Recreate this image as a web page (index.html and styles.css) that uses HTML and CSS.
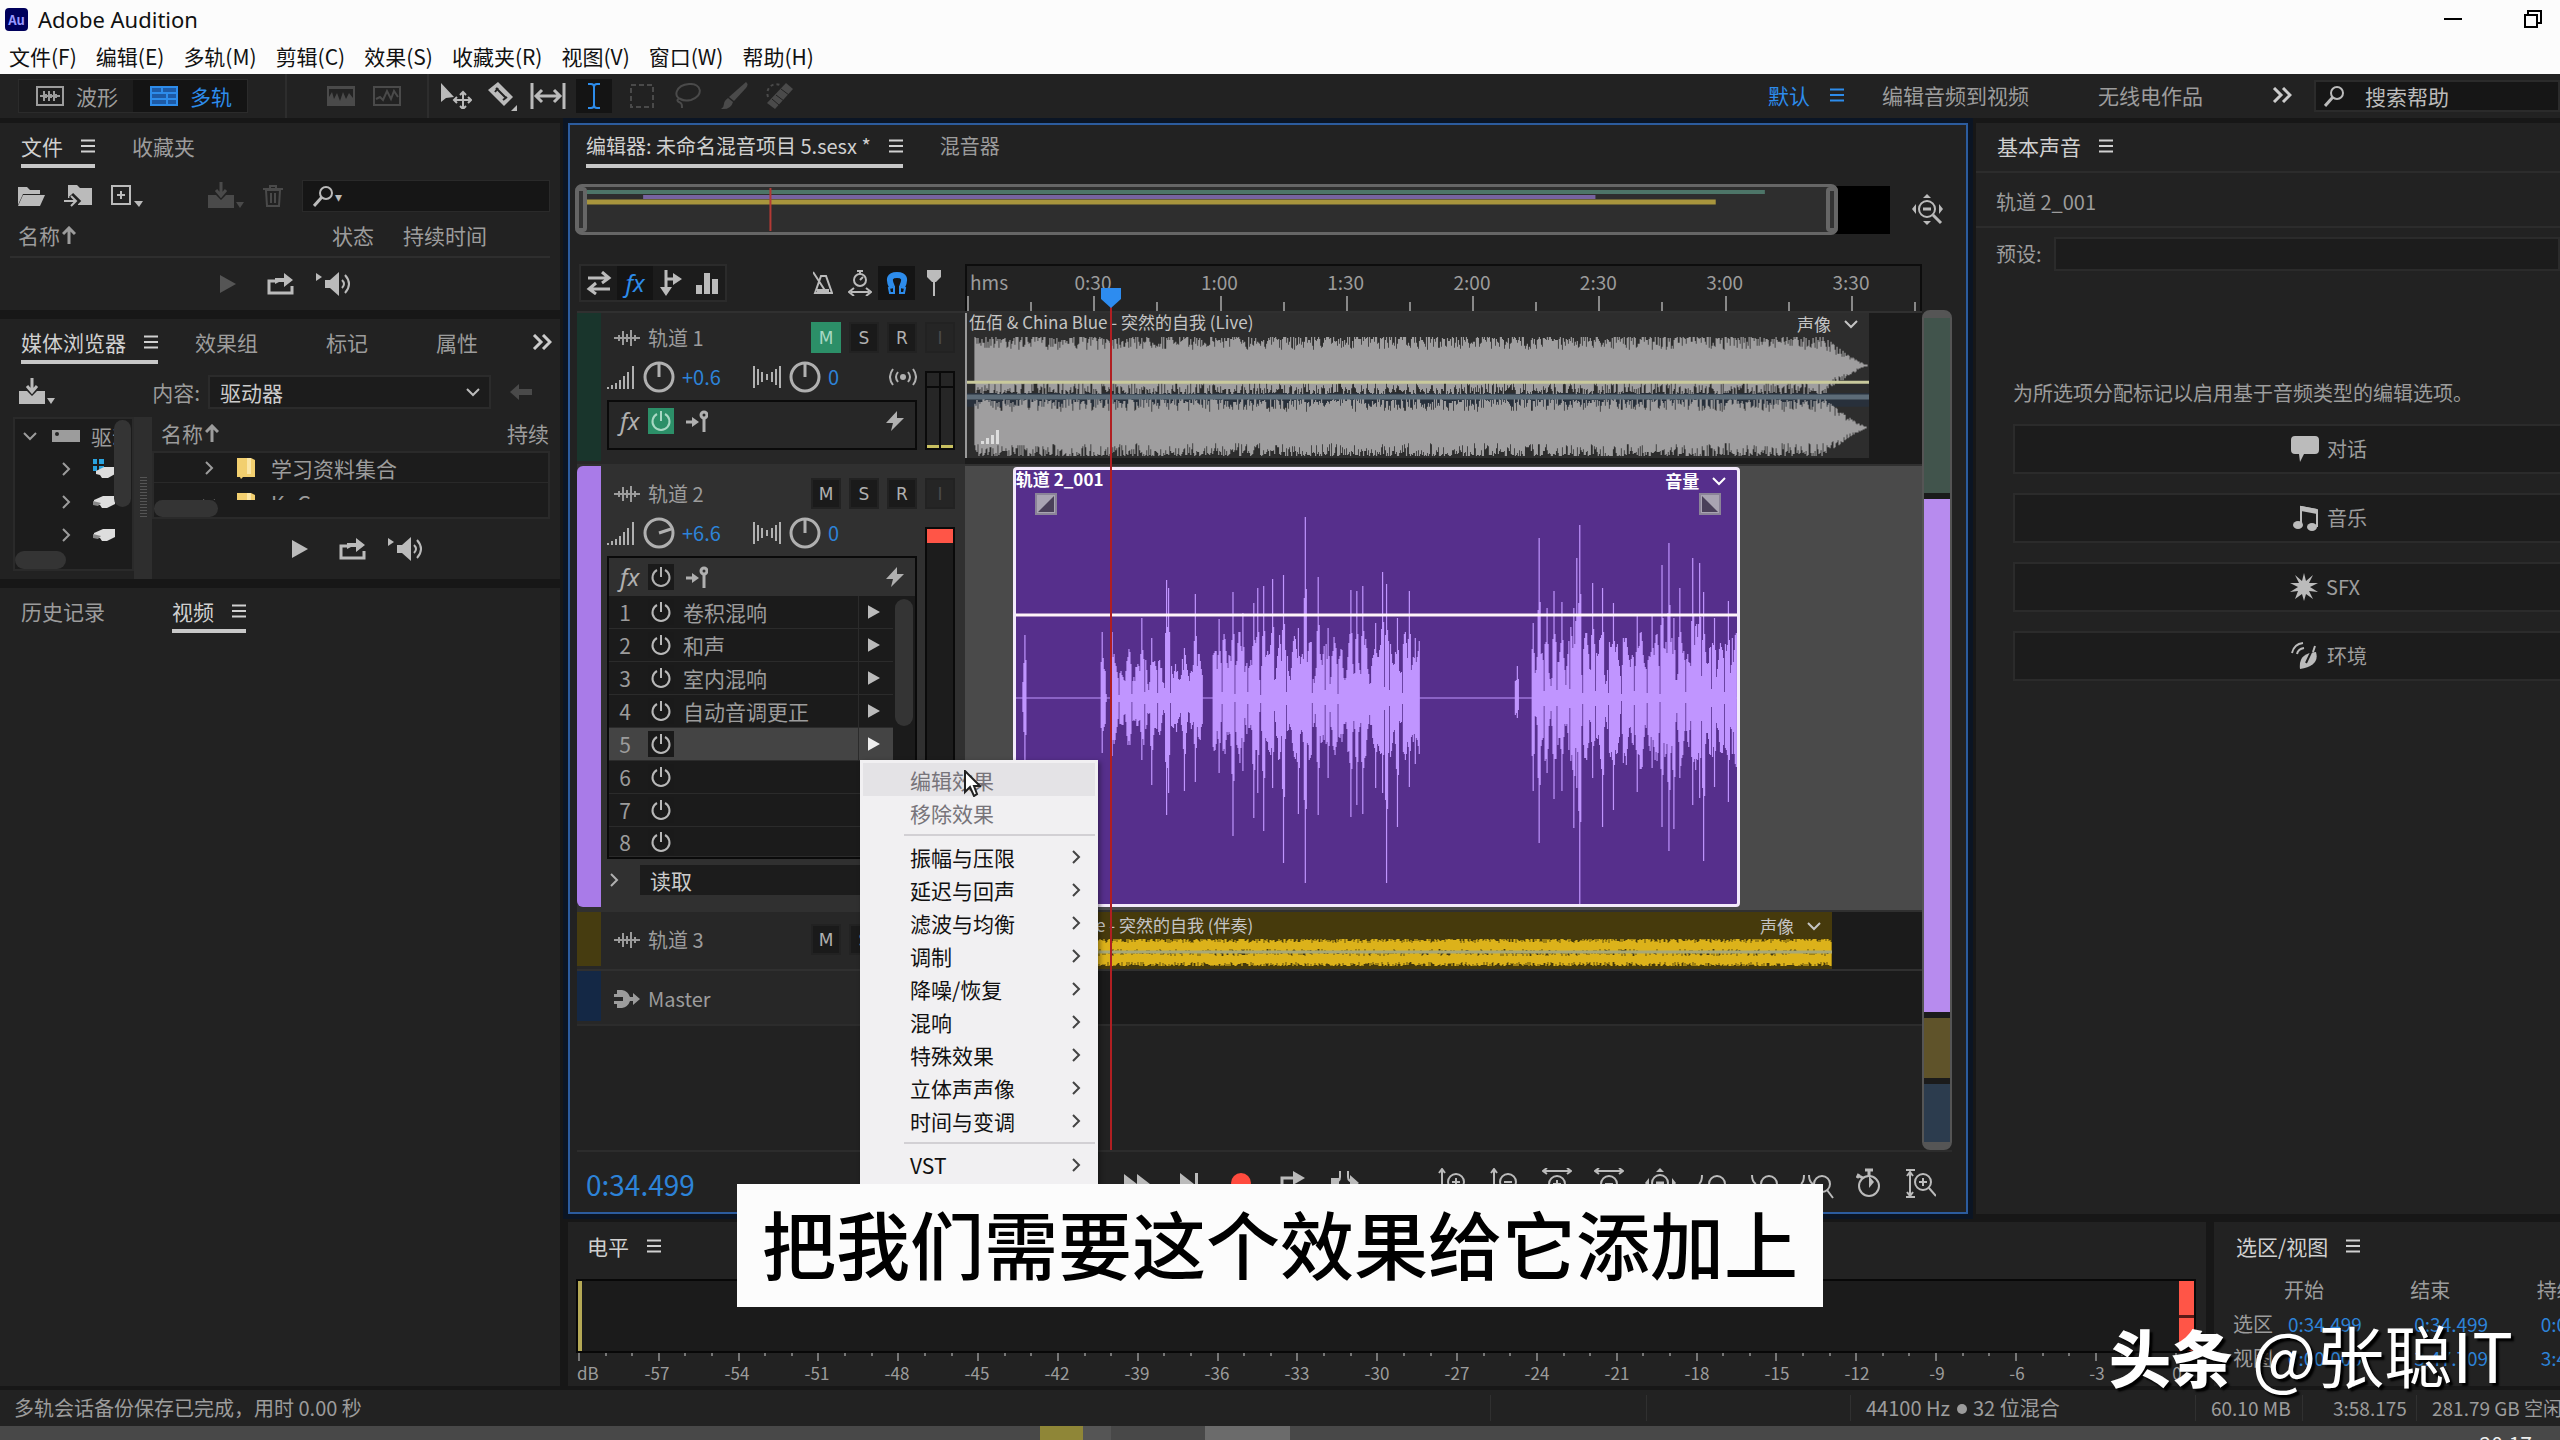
FILE: index.html
```html
<!DOCTYPE html>
<html lang="zh-CN">
<head>
  <meta charset="UTF-8">
  <meta name="viewport" content="width=device-width, initial-scale=1.0">
  <title>Adobe Audition</title>
  <link rel="stylesheet" href="styles.css">
</head>
<body>

<!-- Icons -->
<svg class="sprite" aria-hidden="true">
  <symbol id="i-menu" viewBox="0 0 14 14"><path d="M0 1.5h14M0 7h14M0 12.5h14" stroke="currentColor" stroke-width="2"/></symbol>
  <symbol id="i-more" viewBox="0 0 20 16"><path d="M2 1l7 7-7 7M11 1l7 7-7 7" fill="none" stroke="currentColor" stroke-width="3"/></symbol>
  <symbol id="i-down" viewBox="0 0 14 14"><path d="M1 4l6 6 6-6" fill="none" stroke="currentColor" stroke-width="2"/></symbol>
  <symbol id="i-right" viewBox="0 0 14 14"><path d="M4 1l6 6-6 6" fill="none" stroke="currentColor" stroke-width="2"/></symbol>
  <symbol id="i-up" viewBox="0 0 14 18"><path d="M7 18V3M1 8l6-6 6 6" fill="none" stroke="currentColor" stroke-width="3"/></symbol>
  <symbol id="i-play" viewBox="0 0 16 18"><path d="M0 0l16 9-16 9z" fill="currentColor"/></symbol>
  <symbol id="i-waveform" viewBox="0 0 28 20"><path d="M1 1h26v18H1z" fill="none" stroke="currentColor" stroke-width="2"/><path d="M4 10h20M8 5v10M13 5v10M18 5v10M10 8v4M15 8v4M20 8v4" stroke="currentColor" stroke-width="2"/></symbol>
  <symbol id="i-multitrack" viewBox="0 0 28 20"><path d="M0 0h28v20H0z" fill="#1d5aa6"/><path d="M1 1h26v18H1zM1 7h26M12 1v6M1 13h16M17 7v12M17 13h10" fill="none" stroke="currentColor" stroke-width="2"/></symbol>
  <symbol id="i-spectral" viewBox="0 0 28 20"><path d="M0 0h28v20H0z" fill="currentColor"/><path d="M2 3v8l3-5 2 7 3-6 3 8 3-9 3 7 3-6 4 5V3z" fill="#222"/></symbol>
  <symbol id="i-pitch" viewBox="0 0 28 20"><path d="M1 1h26v18H1z" fill="none" stroke="currentColor" stroke-width="2"/><path d="M3 13l4-2 3 3 4-9 4 8 3-8 4 6" fill="none" stroke="currentColor" stroke-width="2"/></symbol>
  <symbol id="i-move" viewBox="0 0 32 26"><path d="M1 0v19l5-4 8-1z" fill="currentColor"/><path d="M23 10v15M15 17h16M20 12l3-3 3 3M20 23l3 3 3-3M17 14l-3 3 3 3M28 14l3 3-3 3" fill="none" stroke="currentColor" stroke-width="2"/></symbol>
  <symbol id="i-razor" viewBox="0 0 30 30"><path d="M11 1l15 15-9 9L1 9z" fill="currentColor"/><path d="M9 7l10 10M8 11l3-4M16 19l4-3" stroke="#222" stroke-width="2"/><path d="M30 24v6h-6z" fill="currentColor"/></symbol>
  <symbol id="i-slip" viewBox="0 0 36 26"><path d="M2 0v26M34 0v26M6 13h24M12 7l-6 6 6 6M24 7l6 6-6 6" fill="none" stroke="currentColor" stroke-width="3"/></symbol>
  <symbol id="i-ibeam" viewBox="0 0 16 26"><path d="M2 1h3q3 0 3 3v18q0 3-3 3H2M14 1h-3q-3 0-3 3M14 25h-3q-3 0-3-3" fill="none" stroke="currentColor" stroke-width="2"/></symbol>
  <symbol id="i-marquee" viewBox="0 0 26 26"><path d="M2 2h22v22H2z" fill="none" stroke="currentColor" stroke-width="2" stroke-dasharray="5 3"/></symbol>
  <symbol id="i-lasso" viewBox="0 0 28 26"><path d="M8 17C-2 14 2 2 15 1s15 12 2 16c-5 1-9 0-10-1-3-2-5 2-2 3s3 3 3 6" fill="none" stroke="currentColor" stroke-width="2"/></symbol>
  <symbol id="i-brush" viewBox="0 0 28 28"><path d="M26 0q3 2 0 6L14 19l-5-4z" fill="currentColor"/><path d="M8 16l5 4q-2 8-12 7 3-2 3-5t4-6z" fill="currentColor"/></symbol>
  <symbol id="i-heal" viewBox="0 0 30 28"><path d="M21 1l7 6-18 20-8-6z" fill="currentColor"/><path d="M16 7l8 6M11 13l8 6M7 17l7 6" stroke="#222" stroke-width="1"/><path d="M3 15C0 6 8 0 15 3" fill="none" stroke="currentColor" stroke-width="2" stroke-dasharray="3 3"/></symbol>
  <symbol id="i-search" viewBox="0 0 22 22"><circle cx="13" cy="8" r="6" fill="none" stroke="currentColor" stroke-width="2"/><path d="M9 12l-8 9" stroke="currentColor" stroke-width="3"/></symbol>
  <symbol id="i-folder" viewBox="0 0 28 22"><path d="M1 20V2h9l3 3h10v4H6z" fill="currentColor"/><path d="M6 10h22l-5 11H1z" fill="currentColor"/></symbol>
  <symbol id="i-import" viewBox="0 0 28 24"><path d="M4 11V1h9l3 3h12v17H14v-4H4z" fill="currentColor"/><path d="M0 17h11M7 11l6 6-6 6" fill="none" stroke="#222" stroke-width="6"/><path d="M0 17h11M7 12l5 5-5 5" fill="none" stroke="currentColor" stroke-width="2"/></symbol>
  <symbol id="i-new" viewBox="0 0 32 24"><path d="M1 2h18v18H1zM10 7v8M6 11h8" fill="none" stroke="currentColor" stroke-width="2"/><path d="M23 17h9l-4 6z" fill="currentColor"/></symbol>
  <symbol id="i-insert" viewBox="0 0 36 28"><path d="M0 13h8l5 5 5-5h8v13H0z" fill="currentColor"/><path d="M13 0v12M8 8l5 6 5-6" fill="none" stroke="currentColor" stroke-width="3"/><path d="M28 20h8l-4 6z" fill="currentColor"/></symbol>
  <symbol id="i-trash" viewBox="0 0 20 22"><path d="M0 4h20M7 4V1h6v3M3 5h14l-1 16H4zM8 8v10M12 8v10" fill="none" stroke="currentColor" stroke-width="2"/></symbol>
  <symbol id="i-export" viewBox="0 0 28 22"><path d="M8 8H2v12h23v-7" fill="none" stroke="currentColor" stroke-width="3"/><path d="M8 11V5h9V0l9 7-9 7V9h-5z" fill="currentColor"/></symbol>
  <symbol id="i-speaker" viewBox="0 0 36 24"><path d="M0 1l6 4-6 4zM9 8h5l9-8v24l-9-8H9z" fill="currentColor"/><path d="M26 8q4 4 0 8M29 3q8 9 0 18" fill="none" stroke="currentColor" stroke-width="2"/></symbol>
  <symbol id="i-drive" viewBox="0 0 28 14"><path d="M0 1h28v12H0z" fill="currentColor"/><circle cx="5" cy="5" r="2" fill="#222"/></symbol>
  <symbol id="i-disk" viewBox="0 0 22 16"><path d="M1 6l9-4h12v8l-8 4H9l-2-3H1z" fill="#ddd"/><path d="M0 7l8 2-3 3-5-1z" fill="#888"/></symbol>
  <symbol id="i-win" viewBox="0 0 22 20"><path d="M0 0h4v5H0zM6 0h5v5H6zM0 7h4v5H0zM6 7h5v5H6z" fill="#2aa3df"/><path d="M3 12l8-4h11v7l-7 4H9l-2-3-4-1z" fill="#ddd"/></symbol>
  <symbol id="i-back" viewBox="0 0 22 16"><path d="M0 8l9-8v5h13v6H9v5z" fill="currentColor"/></symbol>
  <symbol id="i-dir" viewBox="0 0 18 22"><path d="M0 1h14l4 2v17H6l-2 2-1-2H0z" fill="#f2cf6f"/><path d="M10 1h4v16h-4z" fill="#fbe6a6"/></symbol>
  <symbol id="i-fit" viewBox="0 0 32 32"><circle cx="15" cy="15" r="8" fill="none" stroke="currentColor" stroke-width="2"/><path d="M11 15h8M21 21l8 8" stroke="currentColor" stroke-width="3"/><path d="M15 0l4 4h-8zM15 31l-4-4h8zM0 15l4-5v10zM31 15l-4-5v10z" fill="currentColor"/></symbol>
  <symbol id="i-swap" viewBox="0 0 26 24"><path d="M2 7h20M16 1l7 6-7 5M24 18H4M10 12l-7 6 7 5" fill="none" stroke="currentColor" stroke-width="3"/></symbol>
  <symbol id="i-sends" viewBox="0 0 24 26"><path d="M7 0v20M7 9h11" stroke="currentColor" stroke-width="3"/><path d="M14 3l9 6-9 6zM1 17h12l-6 9z" fill="currentColor"/></symbol>
  <symbol id="i-eq" viewBox="0 0 22 22"><path d="M0 13h6v9H0zM8 1h6v21H8zM16 7h6v15h-6z" fill="currentColor"/></symbol>
  <symbol id="i-metro" viewBox="0 0 20 24"><path d="M2 22L8 5h5l6 17zM0 1l13 20" fill="none" stroke="currentColor" stroke-width="2"/><path d="M4 18h12v4H4z" fill="currentColor"/></symbol>
  <symbol id="i-stretch" viewBox="0 0 24 26"><circle cx="12" cy="10" r="6" fill="none" stroke="currentColor" stroke-width="2"/><path d="M9 1h6M12 1v3M12 10l3-3M3 22h18M6 18l-5 4 5 4M18 18l5 4-5 4" fill="none" stroke="currentColor" stroke-width="2"/></symbol>
  <symbol id="i-magnet" viewBox="0 0 22 24"><path d="M6 16Q0 4 11 4q11 0 5 12" fill="none" stroke="currentColor" stroke-width="6"/><path d="M3 17l5-1v6H4zM19 17l-5-1v6h4z" fill="none" stroke="currentColor" stroke-width="2"/></symbol>
  <symbol id="i-marker" viewBox="0 0 14 26"><path d="M0 0h14v7l-5 5H5L0 7z" fill="currentColor"/><path d="M7 10v16" stroke="currentColor" stroke-width="2"/></symbol>
  <symbol id="i-audio" viewBox="0 0 26 18"><path d="M0 9h26" stroke="currentColor" stroke-width="2"/><path d="M5 6v6M9 2v14M13 5v8M17 1v16M21 6v6" stroke="currentColor" stroke-width="2"/></symbol>
  <symbol id="i-level" viewBox="0 0 28 24"><path d="M1 22v2M5 20v4M9 18v6M13 15v9M17 11v13M21 7v17M26 1v23" stroke="currentColor" stroke-width="2"/></symbol>
  <symbol id="i-pan" viewBox="0 0 28 24"><path d="M1 1v22M5 4v16M9 7v10M14 9v6M19 7v10M23 4v16M27 1v22" stroke="currentColor" stroke-width="2"/></symbol>
  <symbol id="i-knob" viewBox="0 0 32 32"><circle cx="16" cy="16" r="14" fill="none" stroke="currentColor" stroke-width="3"/><path d="M16 3v13" stroke="currentColor" stroke-width="3"/></symbol>
  <symbol id="i-knob-right" viewBox="0 0 32 32"><circle cx="16" cy="16" r="14" fill="none" stroke="currentColor" stroke-width="3"/><path d="M28 12l-12 4" stroke="currentColor" stroke-width="3"/></symbol>
  <symbol id="i-monitor" viewBox="0 0 28 18"><circle cx="14" cy="9" r="3" fill="currentColor"/><path d="M9 4q-4 5 0 10M19 4q4 5 0 10M4 1q-6 8 0 16M24 1q6 8 0 16" fill="none" stroke="currentColor" stroke-width="2"/></symbol>
  <symbol id="i-power" viewBox="0 0 22 22"><path d="M7 4a8.5 8.5 0 1 0 8 0M11 1v10" fill="none" stroke="currentColor" stroke-width="2"/></symbol>
  <symbol id="i-pre" viewBox="0 0 22 22"><path d="M0 12h8M18 8v14" stroke="currentColor" stroke-width="3"/><path d="M6 7l7 5-7 5z" fill="currentColor"/><circle cx="18" cy="5" r="3" fill="none" stroke="currentColor" stroke-width="3"/></symbol>
  <symbol id="i-bolt" viewBox="0 0 18 20"><path d="M11 0L0 12h7l-2 8L18 7h-7z" fill="currentColor"/></symbol>
  <symbol id="i-master" viewBox="0 0 26 20"><path d="M3 1h5q6 1 8 7h3V4l7 6-7 6v-4h-3q-2 6-8 7H3v-4H0v-3h9v-4H0V5h3z" fill="currentColor"/></symbol>
  <symbol id="i-steps" viewBox="0 0 18 14"><path d="M0 11h3v3H0zM5 8h3v6H5zM10 5h3v9h-3zM15 0h3v14h-3z" fill="currentColor"/></symbol>
  <symbol id="i-fadein" viewBox="0 0 22 22"><path d="M1 1h20v20H1z" fill="#a9a4b2" stroke="#8b8498" stroke-width="2"/><path d="M19 3v16H3z" fill="#4a4059"/></symbol>
  <symbol id="i-fadeout" viewBox="0 0 22 22"><path d="M1 1h20v20H1z" fill="#a9a4b2" stroke="#8b8498" stroke-width="2"/><path d="M3 3l16 16H3z" fill="#4a4059"/></symbol>
  <symbol id="i-stop" viewBox="0 0 28 28"><path d="M4 4h20v20H4z" fill="currentColor"/></symbol>
  <symbol id="i-ff" viewBox="0 0 28 28"><path d="M1 4l13 10L1 24zM14 4l13 10-13 10z" fill="currentColor"/></symbol>
  <symbol id="i-next" viewBox="0 0 28 28"><path d="M5 3l14 11L5 25zM20 3h3v22h-3z" fill="currentColor"/></symbol>
  <symbol id="i-rec" viewBox="0 0 28 28"><circle cx="14" cy="13" r="10" fill="#ff4b3e"/></symbol>
  <symbol id="i-loop" viewBox="0 0 28 28"><path d="M3 22V8h13M25 15v9H8" fill="none" stroke="currentColor" stroke-width="3"/><path d="M14 1l12 7-12 7z" fill="currentColor"/></symbol>
  <symbol id="i-skip" viewBox="0 0 28 28"><path d="M9 1v6q0 5-6 5M17 1v6q0 5 7 5" fill="none" stroke="currentColor" stroke-width="2"/><path d="M0 8h8v9H0zM19 5l9 8-9 7z" fill="currentColor"/></symbol>
  <symbol id="i-vin" viewBox="0 0 30 32"><circle cx="18" cy="14" r="8" fill="none" stroke="currentColor" stroke-width="2"/><path d="M14 14h8M18 10v8M24 20l6 6M4 2v26M1 5l3-4 3 4" fill="none" stroke="currentColor" stroke-width="2"/></symbol>
  <symbol id="i-vout" viewBox="0 0 30 32"><circle cx="18" cy="14" r="8" fill="none" stroke="currentColor" stroke-width="2"/><path d="M14 14h8M24 20l6 6M4 2v26M1 5l3-4 3 4" fill="none" stroke="currentColor" stroke-width="2"/></symbol>
  <symbol id="i-hin" viewBox="0 0 30 32"><circle cx="15" cy="16" r="8" fill="none" stroke="currentColor" stroke-width="2"/><path d="M11 16h8M15 12v8M21 22l6 6M1 3h28M5 0L1 3l4 3M25 0l4 3-4 3" fill="none" stroke="currentColor" stroke-width="2"/></symbol>
  <symbol id="i-hout" viewBox="0 0 30 32"><circle cx="15" cy="16" r="8" fill="none" stroke="currentColor" stroke-width="2"/><path d="M11 16h8M21 22l6 6M1 3h28M5 0L1 3l4 3M25 0l4 3-4 3" fill="none" stroke="currentColor" stroke-width="2"/></symbol>
  <symbol id="i-zsel" viewBox="0 0 30 32"><circle cx="19" cy="16" r="8" fill="none" stroke="currentColor" stroke-width="2"/><path d="M25 22l5 6M4 7q0 7-3 9" fill="none" stroke="currentColor" stroke-width="2"/></symbol>
  <symbol id="i-zout" viewBox="0 0 30 32"><circle cx="19" cy="16" r="8" fill="none" stroke="currentColor" stroke-width="2"/><path d="M25 22l5 6M2 7q0 7 4 9" fill="none" stroke="currentColor" stroke-width="2"/></symbol>
  <symbol id="i-zboth" viewBox="0 0 34 32"><circle cx="22" cy="16" r="8" fill="none" stroke="currentColor" stroke-width="2"/><path d="M27 22l6 8M4 7q0 7-3 9M9 7q0 7 4 9" fill="none" stroke="currentColor" stroke-width="2"/></symbol>
  <symbol id="i-timer" viewBox="0 0 26 32"><circle cx="13" cy="18" r="10" fill="none" stroke="currentColor" stroke-width="2"/><path d="M9 2h8M13 2v6M3 6l-2 4M3 8l4 2" stroke="currentColor" stroke-width="3"/><path d="M13 8l5 6-5 6z" fill="currentColor"/></symbol>
  <symbol id="i-zfull" viewBox="0 0 30 32"><circle cx="17" cy="14" r="8" fill="none" stroke="currentColor" stroke-width="2"/><path d="M13 14h8M17 10v8M23 20l7 8M0 2h9M0 29h9M4 4v23M1 8l3-4 3 4M1 24l3 4 3-4" fill="none" stroke="currentColor" stroke-width="2"/></symbol>
  <symbol id="i-talk" viewBox="0 0 28 26"><path d="M4 0h20q4 0 4 4v10q0 4-4 4H13l-4 8-1-8H4q-4 0-4-4V4q0-4 4-4z" fill="currentColor"/></symbol>
  <symbol id="i-music" viewBox="0 0 28 26"><path d="M10 20V2l16 3v17" fill="none" stroke="currentColor" stroke-width="2"/><path d="M10 1l16 3v5L10 6z" fill="currentColor"/><ellipse cx="7" cy="20" rx="5" ry="4" fill="currentColor"/><ellipse cx="21" cy="22" rx="5" ry="4" fill="currentColor"/></symbol>
  <symbol id="i-sfx" viewBox="0 0 28 28"><path d="M14 0l2 8 7-6-4 8 9 0-8 4 8 5-9-1 4 8-7-5-2 7-2-7-7 5 3-8-8 1 8-5-8-4 9 0-4-8 7 6z" fill="currentColor"/></symbol>
  <symbol id="i-amb" viewBox="0 0 28 28"><path d="M9 27q-2-16 16-17 4 14-16 17z" fill="currentColor"/><path d="M15 21l8-17" stroke="#1c1c1c" stroke-width="2"/><path d="M22 10l2-6M1 11q2-9 11-10M6 12q1-5 7-6" fill="none" stroke="currentColor" stroke-width="2"/></symbol>
</svg>

<header class="titlebar">
  <div class="title-row">
    <span class="logo">Au</span>
    <span class="app-name">Adobe Audition</span>
    <div class="win-buttons">
      <button aria-label="最小化"><svg width="18" height="18" viewBox="0 0 18 18"><path d="M0 9h18" stroke="#000" stroke-width="2"/></svg></button>
      <button aria-label="还原"><svg width="18" height="18" viewBox="0 0 18 18"><path d="M1 5h12v12H1zM4 5V1h13v12h-4" fill="none" stroke="#000" stroke-width="2"/></svg></button>
    </div>
  </div>
  <nav class="menubar">
    <button>文件(F)</button><button>编辑(E)</button><button>多轨(M)</button><button>剪辑(C)</button><button>效果(S)</button><button>收藏夹(R)</button><button>视图(V)</button><button>窗口(W)</button><button>帮助(H)</button>
  </nav>
</header>

<div class="toolbar">
  <div class="mode">
    <button><svg width="28" height="20"><use href="#i-waveform"/></svg>波形</button>
    <button class="on"><svg width="28" height="20"><use href="#i-multitrack"/></svg>多轨</button>
  </div>
  <div class="tools views">
    <button class="dim"><svg width="28" height="20"><use href="#i-spectral"/></svg></button>
    <button class="dim"><svg width="28" height="20"><use href="#i-pitch"/></svg></button>
  </div>
  <div class="tools">
    <button><svg width="32" height="26"><use href="#i-move"/></svg></button>
    <button><svg width="30" height="30"><use href="#i-razor"/></svg></button>
    <button><svg width="36" height="26"><use href="#i-slip"/></svg></button>
    <button class="on"><svg width="16" height="26"><use href="#i-ibeam"/></svg></button>
    <button class="dim"><svg width="26" height="26"><use href="#i-marquee"/></svg></button>
    <button class="dim"><svg width="28" height="26"><use href="#i-lasso"/></svg></button>
    <button class="dim"><svg width="28" height="28"><use href="#i-brush"/></svg></button>
    <button class="dim"><svg width="30" height="28"><use href="#i-heal"/></svg></button>
  </div>
  <div class="workspaces">
    <button class="on">默认 <svg width="14" height="14"><use href="#i-menu"/></svg></button>
    <button>编辑音频到视频</button>
    <button>无线电作品</button>
    <button class="bright" aria-label="更多"><svg width="20" height="16"><use href="#i-more"/></svg></button>
  </div>
  <label class="help-search">
    <svg width="22" height="22"><use href="#i-search"/></svg>
    <input type="text" placeholder="搜索帮助" aria-label="搜索帮助">
  </label>
</div>

<main>
  <aside class="left">
    <section class="panel files">
      <div class="tabs">
        <button class="tab on">文件<svg width="14" height="14"><use href="#i-menu"/></svg></button>
        <button class="tab">收藏夹</button>
      </div>
      <div class="file-tools">
        <button><svg width="28" height="22"><use href="#i-folder"/></svg></button>
        <button><svg width="28" height="24"><use href="#i-import"/></svg></button>
        <button><svg width="32" height="24"><use href="#i-new"/></svg></button>
        <button class="dim push"><svg width="36" height="28"><use href="#i-insert"/></svg></button>
        <button class="dim"><svg width="20" height="22"><use href="#i-trash"/></svg></button>
        <label class="search"><svg width="22" height="22"><use href="#i-search"/></svg><span>▾</span><input type="text" aria-label="搜索文件"></label>
      </div>
      <table class="file-table">
        <thead><tr><th>名称<svg width="14" height="18"><use href="#i-up"/></svg></th><th>状态</th><th>持续时间</th></tr></thead>
      </table>
      <div class="mini-transport">
        <button class="dim"><svg width="16" height="18"><use href="#i-play"/></svg></button>
        <button><svg width="28" height="22"><use href="#i-export"/></svg></button>
        <button><svg width="36" height="24"><use href="#i-speaker"/></svg></button>
      </div>
    </section>

    <section class="panel media">
      <div class="tabs">
        <button class="tab on">媒体浏览器<svg width="14" height="14"><use href="#i-menu"/></svg></button>
        <button class="tab">效果组</button>
        <button class="tab">标记</button>
        <button class="tab">属性</button>
        <button class="more" aria-label="更多"><svg width="20" height="16"><use href="#i-more"/></svg></button>
      </div>
      <div class="media-bar">
        <button><svg width="38" height="28"><use href="#i-insert"/></svg></button>
        <label for="content">内容:</label>
        <select id="content"><option>驱动器</option></select>
        <button class="dim"><svg width="22" height="16"><use href="#i-back"/></svg></button>
      </div>
      <div class="media-body">
        <div class="tree">
          <div class="tree-rows">
            <button class="tree-row root"><svg width="14" height="14"><use href="#i-down"/></svg><svg width="28" height="14"><use href="#i-drive"/></svg>驱动器</button>
            <button class="tree-row"><svg width="14" height="14"><use href="#i-right"/></svg><svg width="22" height="20"><use href="#i-win"/></svg></button>
            <button class="tree-row"><svg width="14" height="14"><use href="#i-right"/></svg><svg width="22" height="16"><use href="#i-disk"/></svg></button>
            <button class="tree-row"><svg width="14" height="14"><use href="#i-right"/></svg><svg width="22" height="16"><use href="#i-disk"/></svg></button>
          </div>
          <i class="thumb tree-v"></i>
          <i class="thumb tree-h"></i>
        </div>
        <div class="splitter"><b></b></div>
        <div class="media-list">
          <div class="list-head"><span>名称<svg width="14" height="18"><use href="#i-up"/></svg></span><span>持续</span></div>
          <div class="list-box">
            <div class="list-rows">
              <div class="list-row"><svg width="14" height="14"><use href="#i-right"/></svg><svg width="18" height="22"><use href="#i-dir"/></svg>学习资料集合</div>
              <div class="list-row"><svg width="14" height="14"><use href="#i-down"/></svg><svg width="18" height="22"><use href="#i-dir"/></svg>KuGou</div>
            </div>
            <i class="thumb list-h"></i>
          </div>
          <div class="mini-transport">
            <button><svg width="16" height="18"><use href="#i-play"/></svg></button>
            <button><svg width="28" height="22"><use href="#i-export"/></svg></button>
            <button><svg width="36" height="24"><use href="#i-speaker"/></svg></button>
          </div>
        </div>
      </div>
    </section>

    <section class="panel history">
      <div class="tabs">
        <button class="tab">历史记录</button>
        <button class="tab on">视频<svg width="14" height="14"><use href="#i-menu"/></svg></button>
      </div>
    </section>
  </aside>

  <div class="work">
    <div class="work-top">
      <section class="panel editor">
        <div class="tabs">
          <button class="tab on">编辑器: 未命名混音项目 5.sesx *<svg width="14" height="14"><use href="#i-menu"/></svg></button>
          <button class="tab">混音器</button>
        </div>

        <div class="overview">
          <div class="ov-track">
            <div class="ov-frame">
              <svg viewBox="0 0 1236 43" preserveAspectRatio="none">
                <path d="M0 4h1175" stroke="#4d7568" stroke-width="4"/>
                <path d="M56 9h950" stroke="#7763a0" stroke-width="4"/>
                <path d="M0 14h1126" stroke="#a8953d" stroke-width="5"/>
                <path d="M183 0v43" stroke="#b33a35" stroke-width="2"/>
              </svg>
            </div>
          </div>
          <button><svg width="32" height="32"><use href="#i-fit"/></svg></button>
        </div>

        <div class="timeline">
          <div class="heads">
            <div class="head-tools">
              <div class="seg">
                <button><svg width="26" height="24"><use href="#i-swap"/></svg></button>
                <button class="on fx">fx</button>
                <button><svg width="24" height="26"><use href="#i-sends"/></svg></button>
                <button><svg width="22" height="22"><use href="#i-eq"/></svg></button>
              </div>
              <div class="seg snap">
                <button><svg width="20" height="24"><use href="#i-metro"/></svg></button>
                <button><svg width="24" height="26"><use href="#i-stretch"/></svg></button>
                <button class="on"><svg width="22" height="24"><use href="#i-magnet"/></svg></button>
                <button><svg width="14" height="26"><use href="#i-marker"/></svg></button>
              </div>
            </div>

            <div class="track green">
              <div class="track-body">
                <div class="track-title"><svg width="26" height="18"><use href="#i-audio"/></svg><span>轨道 1</span><button class="sq mute">M</button><button class="sq">S</button><button class="sq">R</button></div>
                <button class="sq off">I</button>
                <div class="knobs">
                  <svg width="28" height="24"><use href="#i-level"/></svg><svg class="knob" width="32" height="32"><use href="#i-knob"/></svg><span class="val">+0.6</span>
                  <svg width="28" height="24"><use href="#i-pan"/></svg><svg class="knob" width="32" height="32"><use href="#i-knob"/></svg><span class="val">0</span>
                  <svg class="mon" width="28" height="18"><use href="#i-monitor"/></svg>
                </div>
                <div class="meter quiet"></div>
                <div class="fxbox">
                  <div class="fx-head"><span class="fx">fx</span><button class="pw mute"><svg width="22" height="22"><use href="#i-power"/></svg></button><svg width="22" height="22"><use href="#i-pre"/></svg><svg class="bolt" width="18" height="20"><use href="#i-bolt"/></svg></div>
                </div>
              </div>
            </div>

            <div class="track purple tall">
              <div class="track-body">
                <div class="track-title"><svg width="26" height="18"><use href="#i-audio"/></svg><span>轨道 2</span><button class="sq">M</button><button class="sq">S</button><button class="sq">R</button></div>
                <button class="sq off">I</button>
                <div class="knobs">
                  <svg width="28" height="24"><use href="#i-level"/></svg><svg class="knob" width="32" height="32"><use href="#i-knob-right"/></svg><span class="val">+6.6</span>
                  <svg width="28" height="24"><use href="#i-pan"/></svg><svg class="knob" width="32" height="32"><use href="#i-knob"/></svg><span class="val">0</span>
                </div>
                <div class="meter clipped"></div>
                <div class="fxbox">
                  <div class="fx-head"><span class="fx">fx</span><button class="pw"><svg width="22" height="22"><use href="#i-power"/></svg></button><svg width="22" height="22"><use href="#i-pre"/></svg><svg class="bolt" width="18" height="20"><use href="#i-bolt"/></svg></div>
                  <div class="fx-list">
                    <ol>
                      <li><span>1</span><button class="pw"><svg width="22" height="22"><use href="#i-power"/></svg></button><em>卷积混响</em><button class="go"><svg width="12" height="14"><use href="#i-play"/></svg></button></li>
                      <li><span>2</span><button class="pw"><svg width="22" height="22"><use href="#i-power"/></svg></button><em>和声</em><button class="go"><svg width="12" height="14"><use href="#i-play"/></svg></button></li>
                      <li><span>3</span><button class="pw"><svg width="22" height="22"><use href="#i-power"/></svg></button><em>室内混响</em><button class="go"><svg width="12" height="14"><use href="#i-play"/></svg></button></li>
                      <li><span>4</span><button class="pw"><svg width="22" height="22"><use href="#i-power"/></svg></button><em>自动音调更正</em><button class="go"><svg width="12" height="14"><use href="#i-play"/></svg></button></li>
                      <li class="sel"><span>5</span><button class="pw"><svg width="22" height="22"><use href="#i-power"/></svg></button><em></em>
                        <div class="go-wrap">
                          <button class="go"><svg width="12" height="14"><use href="#i-play"/></svg></button>
                          <!-- Effect popup menu -->
                          <div class="popup" role="menu">
                            <button class="hover" disabled>编辑效果</button>
                            <button disabled>移除效果</button>
                            <hr>
                            <button>振幅与压限<svg width="14" height="14"><use href="#i-right"/></svg></button>
                            <button>延迟与回声<svg width="14" height="14"><use href="#i-right"/></svg></button>
                            <button>滤波与均衡<svg width="14" height="14"><use href="#i-right"/></svg></button>
                            <button>调制<svg width="14" height="14"><use href="#i-right"/></svg></button>
                            <button>降噪/恢复<svg width="14" height="14"><use href="#i-right"/></svg></button>
                            <button>混响<svg width="14" height="14"><use href="#i-right"/></svg></button>
                            <button>特殊效果<svg width="14" height="14"><use href="#i-right"/></svg></button>
                            <button>立体声声像<svg width="14" height="14"><use href="#i-right"/></svg></button>
                            <button>时间与变调<svg width="14" height="14"><use href="#i-right"/></svg></button>
                            <hr>
                            <button>VST<svg width="14" height="14"><use href="#i-right"/></svg></button>
                            <svg class="cursor" width="17" height="27" viewBox="0 0 17 27"><path d="M1 1v21l5-5 4 9 3-2-3-8h6z" fill="#fff" stroke="#222" stroke-width="2"/></svg>
                          </div>
                        </div>
                      </li>
                      <li><span>6</span><button class="pw"><svg width="22" height="22"><use href="#i-power"/></svg></button><em></em></li>
                      <li><span>7</span><button class="pw"><svg width="22" height="22"><use href="#i-power"/></svg></button><em></em></li>
                      <li><span>8</span><button class="pw"><svg width="22" height="22"><use href="#i-power"/></svg></button><em></em></li>
                    </ol>
                    <i class="thumb"></i>
                  </div>
                </div>
                <div class="auto"><button><svg width="14" height="14"><use href="#i-right"/></svg></button><select aria-label="自动化模式"><option>读取</option></select></div>
              </div>
            </div>

            <div class="track gold tall">
              <div class="track-body">
                <div class="track-title"><svg width="26" height="18"><use href="#i-audio"/></svg><span>轨道 3</span><button class="sq">M</button><button class="sq">S</button><button class="sq">R</button></div>
                <button class="sq off">I</button>
              </div>
            </div>

            <div class="track navy tall">
              <div class="track-body">
                <div class="track-title"><svg width="26" height="20"><use href="#i-master"/></svg><span>Master</span></div>
              </div>
            </div>
            <div class="void"></div>
          </div>

          <div class="lanes">
            <div class="ruler">
              <span class="hms">hms</span>
              <div class="ruler-labels"><span>0:30</span><span>1:00</span><span>1:30</span><span>2:00</span><span>2:30</span><span>3:00</span><span>3:30</span></div>
              <div class="ruler-ticks" id="ruler-ticks"></div>
            </div>
            <div class="lane lane1">
              <div class="clip clip-live">
                <div class="clip-head"><span>伍佰 &amp; China Blue - 突然的自我 (Live)</span><button>声像<svg width="14" height="14"><use href="#i-down"/></svg></button></div>
                <div class="wave-box"><svg id="wave1" viewBox="0 0 903 126" preserveAspectRatio="none"></svg><svg class="steps" width="18" height="14"><use href="#i-steps"/></svg></div>
              </div>
            </div>
            <div class="lane lane2">
              <div class="clip clip-voice">
                <div class="clip-head"><span>轨道 2_001</span><button>音量<svg width="14" height="14"><use href="#i-down"/></svg></button></div>
                <div class="fades"><svg width="22" height="22"><use href="#i-fadein"/></svg><svg width="22" height="22"><use href="#i-fadeout"/></svg></div>
                <svg id="wave2" viewBox="0 0 728 434" preserveAspectRatio="none"></svg>
              </div>
            </div>
            <div class="lane lane3">
              <div class="clip clip-inst">
                <div class="clip-head"><span>伍佰 &amp; China Blue - 突然的自我 (伴奏)</span><button>声像<svg width="14" height="14"><use href="#i-down"/></svg></button></div>
                <svg id="wave3" viewBox="0 0 867 28" preserveAspectRatio="none"></svg>
              </div>
            </div>
            <div class="lane lane4"></div>
            <div class="void"></div>
            <div class="playhead"><svg width="20" height="20" viewBox="0 0 20 20"><path d="M0 0h20v11l-10 9-10-9z" fill="#2d8cf0"/></svg></div>
          </div>

          <div class="vnav"><i class="n1"></i><i class="n2"></i><i class="n3"></i><i class="n4"></i></div>
        </div>

        <div class="transport">
          <output class="timecode">0:34.499</output>
          <div class="cells">
            <button><svg width="28" height="28"><use href="#i-stop"/></svg></button>
            <button><svg width="28" height="28"><use href="#i-ff"/></svg></button>
            <button><svg width="28" height="28"><use href="#i-next"/></svg></button>
            <button><svg width="28" height="28"><use href="#i-rec"/></svg></button>
            <button><svg width="28" height="28"><use href="#i-loop"/></svg></button>
            <button><svg width="28" height="28"><use href="#i-skip"/></svg></button>
          </div>
          <div class="cells zooms">
            <button><svg width="30" height="32"><use href="#i-vin"/></svg></button>
            <button><svg width="30" height="32"><use href="#i-vout"/></svg></button>
            <button><svg width="30" height="32"><use href="#i-hin"/></svg></button>
            <button><svg width="30" height="32"><use href="#i-hout"/></svg></button>
            <button><svg width="32" height="32"><use href="#i-fit"/></svg></button>
            <button><svg width="30" height="32"><use href="#i-zsel"/></svg></button>
            <button><svg width="30" height="32"><use href="#i-zout"/></svg></button>
            <button><svg width="34" height="32"><use href="#i-zboth"/></svg></button>
            <button><svg width="26" height="32"><use href="#i-timer"/></svg></button>
            <button><svg width="30" height="32"><use href="#i-zfull"/></svg></button>
          </div>
        </div>
      </section>

      <aside class="panel sound">
        <div class="tabs plain"><button class="tab on">基本声音<svg width="14" height="14"><use href="#i-menu"/></svg></button></div>
        <p class="sound-clip">轨道 2_001</p>
        <div class="preset"><label for="preset">预设:</label><select id="preset" class="bare"><option></option></select></div>
        <div class="sound-types">
          <p>为所选项分配标记以启用基于音频类型的编辑选项。</p>
          <button><svg width="28" height="28"><use href="#i-talk"/></svg>对话</button>
          <button><svg width="28" height="28"><use href="#i-music"/></svg>音乐</button>
          <button class="short"><svg width="28" height="28"><use href="#i-sfx"/></svg>SFX</button>
          <button><svg width="28" height="28"><use href="#i-amb"/></svg>环境</button>
        </div>
      </aside>
    </div>

    <div class="work-bottom">
      <section class="panel levels">
        <div class="tabs plain"><button class="tab on">电平<svg width="14" height="14"><use href="#i-menu"/></svg></button></div>
        <div class="level-meter"><i></i><b></b></div>
        <div class="db-ticks" id="db-ticks"></div>
        <div class="db-labels"><span>dB</span><span>-57</span><span>-54</span><span>-51</span><span>-48</span><span>-45</span><span>-42</span><span>-39</span><span>-36</span><span>-33</span><span>-30</span><span>-27</span><span>-24</span><span>-21</span><span>-18</span><span>-15</span><span>-12</span><span>-9</span><span>-6</span><span>-3</span><span>0</span></div>
      </section>
      <section class="panel selection">
        <div class="tabs plain"><button class="tab on">选区/视图<svg width="14" height="14"><use href="#i-menu"/></svg></button></div>
        <table>
          <tr><td></td><th>开始</th><th>结束</th><th>持续时间</th></tr>
          <tr><th>选区</th><td>0:34.499</td><td>0:34.499</td><td>0:00.000</td></tr>
          <tr><th>视图</th><td>0:00.000</td><td>3:47.709</td><td>3:47.709</td></tr>
        </table>
      </section>
    </div>
  </div>
</main>

<footer class="status">
  <span class="msg">多轨会话备份保存已完成，用时 0.00 秒</span>
  <span class="cell s1"></span>
  <span class="cell s2"></span>
  <span class="cell s3">44100 Hz <i class="dot"></i> 32 位混合</span>
  <span class="cell s4">60.10 MB</span>
  <span class="cell s5">3:58.175</span>
  <span class="cell s6">281.79 GB 空闲</span>
</footer>
<div class="taskbar"><i class="t1"></i><i class="t2"></i><i class="t3"></i><span>20:17</span></div>

<div class="caption">把我们需要这个效果给它添加上</div>
<div class="watermark"><b>头条</b>@张聪IT</div>

<script src="script.js"></script>
</body>
</html>
```
FILE: styles.css
```css
* {
  box-sizing: border-box;
  margin: 0;
  padding: 0;
}

body {
  display: flex;
  flex-direction: column;
  height: 100vh;
  overflow: hidden;
  background: #171717;
  color: #9c9c9c;
  font-family: "Noto Sans CJK SC", "Noto Sans", sans-serif;
  font-size: 21px;
  line-height: 28px;
}

button, input, select {
  font: inherit;
  color: inherit;
  background: none;
  border: 0;
  outline: 0;
}

button {
  display: flex;
  align-items: center;
  justify-content: center;
  white-space: nowrap;
}

svg {
  display: block;
  flex: none;
}

ol {
  list-style: none;
}

em {
  font-style: normal;
}

.sprite {
  position: absolute;
  width: 0;
  height: 0;
}

.dim {
  color: #4a4a4a;
}

.fx {
  font-family: "Noto Sans", sans-serif;
  font-style: italic;
  font-size: 24px;
}

.thumb {
  display: block;
  background: #343434;
  border-radius: 9px;
}

/* Title and menus */
.titlebar {
  height: 74px;
  background: #fcfcfc;
  color: #111;
}

.title-row {
  display: flex;
  align-items: center;
  height: 38px;
  padding-left: 5px;
}

.logo {
  width: 23px;
  height: 23px;
  margin-right: 10px;
  border-radius: 4px;
  background: #00005b;
  color: #9999ff;
  font-size: 13px;
  font-weight: bold;
  line-height: 23px;
  text-align: center;
}

.app-name {
  font-family: "Noto Sans", sans-serif;
  font-size: 22px;
}

.win-buttons {
  display: flex;
  gap: 62px;
  margin-left: auto;
  padding-right: 18px;
}

.menubar {
  display: flex;
  gap: 19px;
  padding: 4px 9px;
}

/* Toolbar */
.toolbar {
  display: flex;
  align-items: center;
  height: 44px;
  padding-left: 18px;
  background: #222;
}

.mode {
  display: flex;
  height: 34px;
  background: #1d1d1d;
  border: 1px solid #2b2b2b;
}

.mode button {
  width: 114px;
  padding-left: 2px;
  gap: 12px;
}

.mode .on, .tools .on, .seg .on {
  background: #141414;
  color: #2d8ceb;
}

.views {
  margin-left: 37px;
  padding: 0 17px 0 31px;
  border: solid #2d2d2d;
  border-width: 0 2px;
}

.tools {
  display: flex;
  align-items: center;
  height: 44px;
  color: #bbb;
}

.tools button {
  width: 46px;
  height: 34px;
}

.views + .tools {
  padding-left: 4px;
}

.tools .dim {
  color: #4a4a4a;
}

.tools .on {
  width: 36px;
  margin: 0 7px 0 5px;
}

.workspaces {
  display: flex;
  gap: 69px;
  margin-left: auto;
  padding: 0 22px 2px 0;
}

.workspaces .on {
  gap: 20px;
  margin-right: -31px;
  color: #2d8ceb;
}

.bright {
  color: #ccc;
}

.help-search {
  display: flex;
  align-items: center;
  gap: 19px;
  width: 246px;
  height: 32px;
  padding-left: 8px;
  background: #161616;
  border: 2px solid #2b2b2b;
  color: #bbb;
}

.help-search input {
  width: 180px;
}

.help-search input::placeholder {
  color: #bbb;
}

/* Panels */
main {
  flex: 1;
  min-height: 0;
  display: grid;
  grid-template-columns: 560px minmax(0, 1fr);
  gap: 8px;
  padding: 5px 0 4px;
}

.panel {
  background: #222;
  min-width: 0;
}

.left {
  display: grid;
  grid-template-rows: 187px 260px 1fr;
  gap: 9px;
}

.work {
  display: grid;
  grid-template-rows: minmax(0, 1fr) 164px;
  gap: 8px;
  min-width: 0;
}

.work-top {
  display: grid;
  grid-template-columns: minmax(0, 1fr) 584px;
  gap: 8px;
}

.work-bottom {
  display: grid;
  grid-template-columns: minmax(0, 1fr) 346px;
  gap: 8px;
}

.tabs {
  display: flex;
  gap: 37px;
  height: 45px;
  padding-left: 21px;
}

.tab {
  gap: 18px;
  padding-top: 5px;
  border-bottom: 4px solid transparent;
}

.tab.on {
  color: #d0d0d0;
  border-bottom-color: #c8c8c8;
}

.plain .tab.on {
  border-color: transparent;
}

/* Files */
.file-tools {
  display: flex;
  align-items: center;
  gap: 19px;
  height: 31px;
  margin-top: 12px;
  padding: 0 10px 0 17px;
  color: #bbb;
}

.file-tools .push {
  margin-left: auto;
}

.search {
  display: flex;
  align-items: center;
  width: 248px;
  height: 32px;
  padding-left: 10px;
  background: #161616;
  border: 1px solid #2a2a2a;
}

.search span {
  font-size: 14px;
}

.search input {
  width: 180px;
}

.file-table {
  width: 540px;
  height: 47px;
  margin-left: 10px;
  border-collapse: collapse;
  border-bottom: 2px solid #2e2e2e;
  table-layout: fixed;
}

.file-table th {
  padding-top: 3px;
  text-align: left;
  font-weight: normal;
  white-space: nowrap;
}

.file-table th:first-child {
  width: 322px;
  padding-left: 8px;
}

.file-table th:nth-child(2) {
  width: 71px;
}

.file-table th svg, .list-head svg {
  display: inline-block;
  margin-left: 2px;
}

.mini-transport {
  display: flex;
  align-items: center;
  gap: 21px;
  height: 52px;
  color: #bbb;
}

.mini-transport button:first-child {
  margin-right: 10px;
}

.files .mini-transport {
  padding-left: 220px;
}

.mini-transport .dim {
  color: #555;
}

/* Media browser */
.media .tabs {
  gap: 0;
}

.media .tab {
  margin-right: 37px;
}

.media .tab:nth-child(n+2) {
  margin-right: 68px;
}

.media .more {
  margin: 0 8px 0 auto;
  color: #ccc;
}

.media .tab:nth-child(4) {
  margin-right: 0;
}

.media-bar {
  display: flex;
  align-items: center;
  height: 34px;
  margin-top: 11px;
  padding-left: 18px;
  color: #bbb;
}

.media-bar label {
  margin: 0 8px 0 auto;
  color: #9c9c9c;
}

select {
  appearance: none;
  height: 34px;
  padding-left: 10px;
  background: #1c1c1c url("data:image/svg+xml,%3Csvg xmlns='http://www.w3.org/2000/svg' width='14' height='14'%3E%3Cpath d='M1 4l6 6 6-6' fill='none' stroke='%23bbb' stroke-width='2'/%3E%3C/svg%3E") right 9px center no-repeat;
  border: 2px solid #2b2b2b;
  color: #ccc;
}

select.bare {
  background-image: none;
}

.media-bar select {
  width: 283px;
  margin-right: 19px;
}

.media-bar .dim {
  margin-right: 28px;
}

.media-body {
  display: grid;
  grid-template-columns: 121px 18px 1fr;
  height: 158px;
  margin: 8px 10px 0 13px;
}

.tree {
  position: relative;
  height: 154px;
  background: #1c1c1c;
  border: 2px solid #2a2a2a;
}

.tree-rows {
  width: 102px;
  overflow: hidden;
}

.tree-row {
  justify-content: flex-start;
  gap: 20px;
  height: 33px;
  padding-left: 44px;
}

.tree-row.root {
  gap: 11px;
  padding-left: 8px;
}

.tree-row.root svg:first-child {
  margin-right: 4px;
}

.tree-v {
  position: absolute;
  top: 1px;
  right: 1px;
  width: 17px;
  height: 87px;
}

.tree-h {
  position: absolute;
  bottom: 0;
  left: 0;
  width: 51px;
  height: 18px;
}

.splitter {
  display: flex;
  justify-content: center;
  align-items: center;
  background: #2e2e2e;
}

.splitter b {
  width: 7px;
  height: 42px;
  background: repeating-linear-gradient(#555 0 1px, #2e2e2e 1px 3px);
}

.list-head {
  display: flex;
  justify-content: space-between;
  height: 34px;
  padding: 2px 1px 0 9px;
}

.list-box {
  height: 68px;
  background: #1c1c1c;
  border: 2px solid #2a2a2a;
}

.list-rows {
  height: 47px;
  overflow: hidden;
}

.list-row {
  display: flex;
  align-items: center;
  gap: 16px;
  height: 30px;
  padding-left: 48px;
  border-bottom: 1px solid #292929;
}

.list-row svg:first-child {
  margin-right: 5px;
}

/* second row is only half in view */
.list-row + .list-row {
  height: 40px;
}

.list-h {
  width: 64px;
  height: 17px;
}

.media .mini-transport {
  height: 60px;
  padding-left: 140px;
}

.history .tabs {
  gap: 67px;
}

/* Editor */
.editor {
  display: flex;
  flex-direction: column;
  border: 2px solid #2c5c9e;
  box-shadow: 0 0 0 5px #0b1524;
}

.editor .tabs {
  height: 43px;
  padding-left: 16px;
  font-size: 20px;
}

.editor .tab {
  padding-top: 3px;
}

.overview {
  display: flex;
  align-items: center;
  gap: 22px;
  height: 51px;
  margin: 16px 22px 0 5px;
  color: #bbb;
}

.ov-track {
  flex: 1;
  padding-right: 52px;
  background: linear-gradient(#000, #000) right center / 60px 48px no-repeat;
}

.ov-frame {
  display: flex;
  justify-content: space-between;
  height: 51px;
  padding: 1px 0;
  background: #2e2e2e;
  border: solid #666;
  border-width: 3px 0;
  border-radius: 7px;
}

.ov-frame::before, .ov-frame::after {
  content: "";
  box-sizing: border-box;
  width: 12px;
  height: 45px;
  margin-top: -1px;
  background: #333;
  border: 4px solid #666;
  border-radius: 4px;
}

.ov-frame svg {
  flex: 1;
  width: 100%;
  min-width: 0;
  height: 43px;
}

.timeline {
  flex: 1;
  display: grid;
  grid-template-columns: 388px minmax(0, 1fr) 30px;
  margin: 29px 14px 0 7px;
  border-bottom: 2px solid #2c2c2c;
}

.heads, .lanes {
  display: grid;
  grid-template-rows: 47px 153px 446px 59px 55px 1fr;
}

.lanes {
  position: relative;
}

.head-tools {
  display: flex;
  justify-content: space-between;
  padding: 0 11px 9px 2px;
  color: #bbb;
}

.seg {
  display: flex;
  background: #1c1c1c;
  border: 2px solid #2b2b2b;
}

.seg button {
  width: 36px;
}

.snap {
  background: none;
  border-color: transparent;
}

.snap button {
  width: 37px;
}

.track {
  display: flex;
  background: #272727;
  border-top: 2px solid #303030;
}

.track::before {
  content: "";
  width: 24px;
  flex: none;
  margin-bottom: 3px;
}

.green::before {
  background: #19352c;
}

.purple::before {
  background: #a97be8;
  border-radius: 6px 0 0 6px;
}

.gold::before {
  background: #463c10;
}

.navy::before {
  background: #142845;
}

.purple {
  background: #303030;
}

.track-body {
  flex: 1;
  display: grid;
  grid-template-columns: 310px 30px;
  grid-template-rows: 31px 47px auto auto;
  column-gap: 8px;
  padding: 9px 9px 0 6px;
  align-content: start;
  color: #b0b0b0;
}

.tall .track-body {
  padding-top: 12px;
}

.track-title {
  display: flex;
  align-items: center;
  gap: 8px;
  padding-left: 7px;
  color: #9c9c9c;
}

.track-title span {
  margin-right: auto;
  font-size: 20px;
}

.sq {
  width: 30px;
  height: 31px;
  background: #1a1a1a;
  border: 2px solid #222;
  color: #b0b0b0;
  font-family: "DejaVu Sans", sans-serif;
  font-size: 17px;
}

.sq.off {
  background: #252525;
  color: #4a4a4a;
}

.sq.mute, .pw.mute {
  background: #2c8f68;
  border-color: #2c8f68;
  color: #a8d8c4;
}

.knobs {
  display: flex;
  align-items: center;
}

.knob {
  margin: 0 7px 0 8px;
}

.val {
  width: 71px;
  color: #2d83d8;
  font-size: 20px;
}

.val ~ .val {
  width: 30px;
}

.mon {
  margin-left: auto;
}

.meter {
  grid-column: 2;
  grid-row: 2 / 4;
  margin-top: 18px;
  border: 2px solid #0a0a0a;
}

.quiet {
  background: linear-gradient(#0a0a0a, #0a0a0a) center / 2px 100% no-repeat, linear-gradient(#0a0a0a, #0a0a0a) 0 13px / 100% 2px no-repeat, linear-gradient(#c8c060, #c8c060) bottom / 100% 3px no-repeat, #262626;
}

.clipped {
  background: linear-gradient(#ff5547, #ff5547) top / 100% 14px no-repeat, #1c1c1c;
}

.fxbox {
  border: 2px solid #0a0a0a;
}

.fx-head {
  display: flex;
  align-items: center;
  height: 38px;
  padding: 0 11px 0 11px;
}

.green .fx-head {
  height: 46px;
  padding-bottom: 9px;
}

.bolt {
  margin-left: auto;
}

.pw {
  width: 26px;
  height: 26px;
  margin: 0 12px 0 9px;
  background: #1a1a1a;
}

.fx-list {
  display: grid;
  grid-template-columns: 1fr 22px;
  background: #1b1b1b;
}

.fx-list li {
  display: grid;
  grid-template-columns: 32px 42px 1fr 35px;
  align-items: center;
  height: 33px;
  border-bottom: 1px solid #2b2b2b;
  color: #9c9c9c;
}

.fx-list li:last-child {
  height: 30px;
}

.fx-list li span {
  text-align: center;
}

.fx-list .pw {
  margin: 0 7px;
  color: #b8b8b8;
}

.fx-list .thumb {
  width: 18px;
  height: 127px;
  margin: 3px 2px;
}

.fx-list .sel {
  background: #444;
}

.go {
  width: 35px;
  height: 32px;
  padding-right: 4px;
  color: #bbb;
  border-left: 1px solid #2b2b2b;
}

.sel .go {
  color: #eee;
}

.go-wrap {
  position: relative;
}

.popup {
  position: absolute;
  z-index: 5;
  top: 32px;
  left: 2px;
  width: 238px;
  height: 440px;
  padding: 3px;
  background: #f1f0f2;
  color: #111;
  box-shadow: 2px 2px 5px rgba(0,0,0,0.4);
}

.popup button {
  justify-content: space-between;
  width: 100%;
  height: 33px;
  padding: 0 12px 0 47px;
}

.popup button svg {
  color: #444;
}

.popup button:disabled {
  color: #77747a;
}

.popup .hover {
  background: #e4e3e6;
}

.popup hr {
  height: 2px;
  margin: 5px 0 4px 41px;
  background: #d2d0d4;
  border: 0;
}

.cursor {
  position: absolute;
  top: 10px;
  left: 104px;
}

.auto {
  display: flex;
  gap: 19px;
  margin-top: 6px;
}

.auto select {
  flex: 1;
  height: 30px;
  border: 0;
}

.void {
  border-top: 2px solid #2c2c2c;
}

/* Lanes */
.ruler {
  position: relative;
  border: 2px solid #0d0d0d;
  border-bottom: 0;
  background: #232323;
}

.hms {
  position: absolute;
  left: 3px;
  top: 2px;
  font-size: 19px;
}

/* zero-width labels stay centred on their tick */
.ruler-labels, .db-labels, .ruler-ticks, .db-ticks {
  display: flex;
  justify-content: space-between;
}

.ruler-labels span, .db-labels span {
  display: flex;
  justify-content: center;
  width: 0;
  white-space: nowrap;
}

.ruler-labels {
  height: 30px;
  padding: 2px 69px 0 126px;
  font-size: 19px;
}

.ruler-ticks {
  align-items: flex-end;
  height: 15px;
  padding-right: 6px;
}

.ruler-ticks i, .db-ticks i {
  width: 2px;
  height: 9px;
  margin-right: -2px;
  background: #888;
}

.ruler-ticks i:nth-child(odd) {
  height: 15px;
}

.lane {
  display: grid;
  background: #1b1b1b;
  border-top: 2px solid #303030;
}

.lane1 {
  grid-template-columns: 904fr 53fr;
  padding-bottom: 6px;
}

.lane2 {
  grid-template-columns: 728fr 182fr;
  padding: 1px 0 3px 5%;
  background: #4a4a4a;
}

.lane3 {
  grid-template-columns: 867fr 90fr;
}

.clip {
  min-width: 0;
  color: #c4c4c4;
}

.clip-head {
  display: flex;
  justify-content: space-between;
  height: 21px;
  font-size: 17px;
  line-height: 18px;
  padding: 0 11px 0 2px;
}

.clip-head button {
  gap: 13px;
}

.clip-live {
  background: #2d2d2d;
  border-left: 2px solid #999;
}

.wave-box {
  position: relative;
}

.wave-box > svg:first-child {
  width: 100%;
  height: 124px;
}

.steps {
  position: absolute;
  left: 14px;
  bottom: 14px;
  color: #ddd;
}

.clip-voice {
  position: relative;
  background: #562f8c;
  border: 3px solid #f3e9fb;
  border-radius: 4px;
  color: #fff;
}

.clip-voice .clip-head {
  padding-left: 0;
  font-weight: bold;
}

.clip-voice > svg {
  position: absolute;
  inset: 0;
  width: 100%;
  height: 100%;
}

.fades {
  display: flex;
  justify-content: space-between;
  padding: 2px 16px 0 19px;
}

.clip-inst {
  background: #463a0c;
}

.clip-inst .clip-head {
  height: 27px;
  line-height: 25px;
}

.clip-inst > svg {
  width: 100%;
  height: 28px;
}

.playhead {
  position: absolute;
  top: 24px;
  bottom: 0;
  left: 15.2%;
  width: 2px;
  background: linear-gradient(transparent 18px, #b01f22 18px);
}

.playhead svg {
  margin-left: -9px;
}

.vnav {
  display: grid;
  grid-template-rows: 175fr 514fr 60fr 58fr;
  gap: 6px;
  margin-top: 46px;
  background: #1b1b1b;
  border: solid #555;
  border-width: 8px 2px;
  border-radius: 8px;
}

.n1 { background: #41544c; }
.n2 { background: #b78bee; }
.n3 { background: #5f532a; }
.n4 { background: #2c3c4e; }

.transport {
  display: flex;
  align-items: center;
  height: 60px;
  padding: 4px 19px 0 16px;
  color: #bbb;
}

.timecode {
  margin-right: auto;
  color: #2d83d8;
  font-size: 28px;
}

.cells {
  display: flex;
}

.cells button {
  width: 52px;
}

.zooms {
  margin-left: 56px;
}

/* Essential sound */
.sound {
  overflow: hidden;
}

.sound .tabs {
  height: 50px;
  padding-bottom: 4px;
}

.sound .tabs, .sound-clip {
  border-bottom: 2px solid #2c2c2c;
}

.sound-clip {
  height: 55px;
  padding: 15px 20px 0;
  font-size: 20px;
}

.preset {
  display: flex;
  align-items: center;
  gap: 12px;
  margin-top: 9px;
  padding-left: 20px;
  font-size: 20px;
}

.preset select {
  flex: 1;
}

.sound-types {
  margin: 108px -85px 0 37px;
}

.sound-types p {
  margin-bottom: 17px;
  font-size: 20px;
}

.sound-types button {
  gap: 8px;
  width: 100%;
  height: 50px;
  margin-bottom: 19px;
  background: #1c1c1c;
  border: 2px solid #2b2b2b;
  font-size: 20px;
}

.sound-types .short {
  padding-right: 8px;
}

.sound-types svg {
  color: #bbb;
}

/* Levels */
.levels .tabs {
  padding: 2px 0 0 19px;
}

.level-meter {
  display: flex;
  justify-content: space-between;
  height: 74px;
  margin: 12px 10px 0 8px;
  background: #1b1b1b;
  border: 2px solid #080808;
}

.level-meter i {
  width: 4px;
  background: #b5a956;
}

.level-meter b {
  width: 15px;
  background: linear-gradient(#ff5547 34px, #5a1a16 34px 37px, #ff5547 37px);
}

.db-ticks {
  height: 10px;
  margin: 0 31px 0 10px;
}

.db-ticks i {
  height: 3px;
  background: #777;
}

.db-ticks i:nth-child(3n+1) {
  height: 8px;
}

.db-labels {
  margin: 0 29px 0 9px;
  font-size: 17px;
  line-height: 20px;
}

.db-labels span:first-child {
  justify-content: flex-start;
}

.selection {
  overflow: hidden;
}

.selection .tabs {
  padding: 2px 0 0 22px;
}

.selection table {
  width: 430px;
  margin: 6px 0 0 19px;
  border-collapse: collapse;
  table-layout: fixed;
}

.selection td, .selection th {
  width: 124px;
  height: 34px;
  text-align: left;
  font-size: 20px;
  font-weight: normal;
  white-space: nowrap;
}

.selection tr > :first-child {
  width: 50px;
}

.selection td {
  padding-left: 4px;
  color: #2d83d8;
  font-size: 19px;
}

/* Status bar */
.status {
  display: flex;
  align-items: center;
  height: 36px;
  padding-left: 14px;
  background: #222;
  font-size: 19px;
}

.msg {
  margin-right: auto;
  font-size: 20px;
}

.cell {
  height: 26px;
  line-height: 26px;
  padding-left: 15px;
  border-left: 1px solid #303030;
  white-space: nowrap;
}

.dot {
  display: inline-block;
  width: 10px;
  height: 10px;
  margin: 0 2px 2px;
  border-radius: 50%;
  background: #9c9c9c;
}

.s1 { width: 156px; }
.s2 { width: 204px; }
.s3 { width: 345px; font-size: 20px; }
.s4 { width: 107px; }
.s5 { width: 114px; padding-left: 30px; }
.s6 { width: 144px; }

.taskbar {
  display: flex;
  height: 14px;
  padding-left: 1040px;
  background: #484848;
  overflow: hidden;
}

.t1 {
  width: 43px;
  background: #8f8637;
}

.t2 {
  width: 28px;
  background: #555;
}

.t3 {
  width: 85px;
  margin-left: 94px;
  background: #6b6b6b;
}

.taskbar span {
  margin: 4px 28px 0 auto;
  color: #eee;
}

/* Overlays */
.caption {
  position: fixed;
  z-index: 10;
  bottom: 133px;
  left: 50%;
  transform: translateX(-50%);
  padding: 0 25px 8px;
  background: #fcfcfc;
  color: #000;
  font-size: 74px;
  font-weight: 500;
  line-height: 115px;
  white-space: nowrap;
}

.watermark {
  position: fixed;
  z-index: 11;
  right: 47px;
  bottom: 44px;
  color: #fff;
  font-size: 68px;
  line-height: 80px;
  text-shadow: 3px 3px 2px #000;
  white-space: nowrap;
}

.watermark b {
  margin-right: 19px;
  font-size: 62px;
  font-weight: 900;
}
```
FILE: script.js
```js
// Small seeded generator so the waves look the same on every load
let seed = 7;
function rnd() {
  seed = (seed * 16807) % 2147483647;
  return seed / 2147483647;
}

function line(y, x2, color, width) {
  return `<path d="M0 ${y}H${x2}" stroke="${color}" stroke-width="${width}"/>`;
}

// Dense music wave around one centre line
function musicWave(cy, amp, width, start, tail, dip) {
  let d = '';
  for (let x = start; x <= width; x += 1) {
    const left = width - x;
    const k = left < tail ? Math.pow(left / tail, 1.3) : 1;
    const up = amp * k * (1 - dip * Math.pow(rnd(), 2));
    const down = amp * k * (1 - dip * Math.pow(rnd(), 2));
    d += `M${x} ${Math.round(cy - up)}V${Math.round(cy + down)}`;
  }
  return d;
}

function waveTag(d, color) {
  return `<path d="${d}" stroke="${color}" stroke-width="1.2" fill="none"/>`;
}

const wave1 = document.getElementById('wave1');
wave1.innerHTML =
  '<path d="M0 60H903V74H0Z" fill="#28303b"/>' +
  waveTag(musicWave(32, 29, 903, 8, 44, 0.45), '#9f9e9f') +
  waveTag(musicWave(95, 29, 903, 8, 44, 0.45), '#9f9e9f') +
  line(49, 903, '#c9c99c', 3) +
  line(64, 903, '#5d6c78', 5);

// Voice peaks: x, height above and below the centre line
const peaks = [
  [9,63,62],[87,66,55],[97,66,58],[127,80,62],[137,60,87],[152,118,117],[154,110,95],[170,50,93],
  [181,104,84],[205,79,75],[219,106,138],[229,85,73],[240,95,120],[244,110,95],[250,112,133],
  [259,119,90],[270,123,165],[285,70,116],[292,181,185],[305,121,117],[315,70,80],[338,108,119],
  [344,107,107],[350,112,116],[363,75,90],[370,126,95],[374,114,185],[385,80,129],[397,107,89],
  [403,60,66],[506,32,20],[522,75,93],[528,160,145],[536,90,75],[543,107,101],[551,96,93],
  [563,90,130],[566,140,90],[569,173,206],[582,115,80],[592,110,129],[603,95,112],[613,60,65],
  [627,83,94],[642,84,70],[652,133,129],[659,155,153],[664,80,131],[670,110,80],[683,140,107],
  [690,135,100],[694,106,163],[705,80,89],[719,97,104],[723,60,56]
];
// Sung phrases: from, to, loudness
const phrases = [[7,10,30],[86,92,28],[97,189,34],[199,408,46],[504,508,12],[521,728,50]];

function voiceWave() {
  const cy = 228;
  let d = `M0 ${cy}H728`;
  for (const [from, to, amp] of phrases) {
    for (let x = from; x < to; x += 1) {
      const swell = 0.7 + 0.5 * Math.sin(x * 0.62) * Math.sin(x * 0.17 + 1);
      const gap = x % 13 === 0 ? 0.15 : 1;
      const up = amp * (swell + rnd() * 0.3) * gap;
      const down = amp * (swell + rnd() * 0.3) * gap;
      d += `M${x} ${Math.round(cy - up)}V${Math.round(cy + down)}`;
    }
  }
  for (const [x, up, down] of peaks) {
    d += `M${x} ${cy - up}V${cy + down}`;
    // shoulders on both sides of a peak
    for (const [dx, k] of [[-1, 0.55], [1, 0.6]]) {
      d += `M${x + dx} ${cy - Math.round(up * k)}V${cy + Math.round(down * k)}`;
    }
  }
  return d;
}

document.getElementById('wave2').innerHTML =
  waveTag(voiceWave(), '#c095ff') +
  line(145, 728, '#fff4f8', 3);

document.getElementById('wave3').innerHTML =
  waveTag(musicWave(7, 7, 867, 0, 1, 0.6), '#dcb21a') +
  waveTag(musicWave(20, 7, 867, 0, 1, 0.6), '#dcb21a') +
  line(13, 867, '#a8a878', 3);

// Ruler and level meter ticks
document.getElementById('ruler-ticks').innerHTML = '<i></i>'.repeat(16);
document.getElementById('db-ticks').innerHTML = '<i></i>'.repeat(61);
```
